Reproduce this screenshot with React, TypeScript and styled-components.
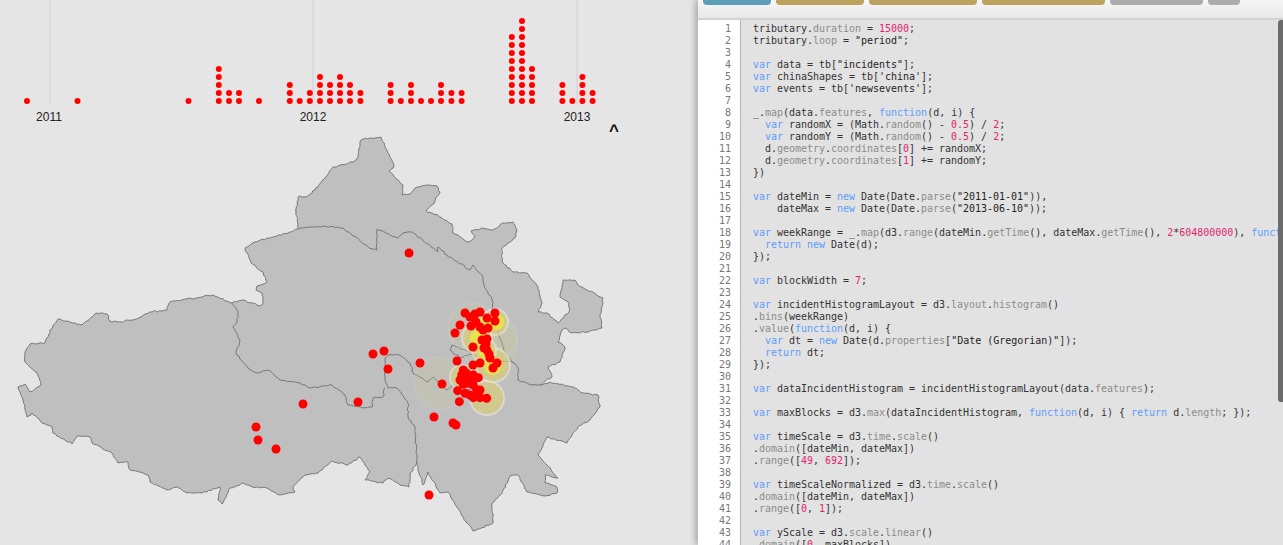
import React from "react";
import styled, { createGlobalStyle } from "styled-components";

const Global = createGlobalStyle`
  html, body { margin: 0; padding: 0; background: #e5e5e5; overflow: hidden; }
  #root { width: 1283px; height: 545px; }
`;

const Page = styled.div`
  display: grid;
  grid-template-columns: 698px 585px;
  width: 1283px;
  height: 545px;
  overflow: hidden;
  background: #e5e5e5;
`;
const VizPane = styled.div`
  position: relative;
  display: flex;
  flex-direction: column;
`;
const Chart = styled.svg`
  display: block;
  flex: none;
`;
const YearLabel = styled.text`
  font: 12px "Liberation Sans", Arial, sans-serif;
  fill: #222;
  text-anchor: middle;
`;
const Caret = styled.div`
  position: absolute;
  left: 604px;
  top: 121px;
  width: 20px;
  text-align: center;
  font: bold 17px/20px "Liberation Sans", Arial, sans-serif;
  color: #111;
`;
const EditorPane = styled.div`
  position: relative;
  display: flex;
  flex-direction: column;
  min-width: 0;
  overflow: hidden;
  box-shadow: -3px 0 6px rgba(0, 0, 0, 0.25);
  z-index: 1;
  clip-path: inset(0 0 0 -8px);
`;
const TopBar = styled.div`
  flex: none;
  box-sizing: border-box;
  height: 20px;
  display: flex;
  gap: 5px;
  padding-left: 5px;
  align-items: flex-start;
  background: linear-gradient(#f6f6f6, #e8e8e8);
  border-bottom: 2px solid #d2d2d2;
`;
const TabButton = styled.div<{ $w: number; $c: string }>`
  width: ${(p) => p.$w}px;
  height: 5px;
  background: ${(p) => p.$c};
  border-radius: 0 0 4px 4px;
`;
const Editor = styled.div`
  flex: 1;
  display: flex;
  min-height: 0;
  overflow: hidden;
  background: #e2e2e2;
  font: 10px/12px "DejaVu Sans Mono", "Liberation Mono", monospace;
`;
const Gutter = styled.div`
  flex: none;
  box-sizing: border-box;
  width: 43px;
  padding: 3px 9px 0 0;
  background: #fff;
  border-right: 1px solid #b5b5b5;
  color: #777;
  text-align: right;
`;
const Code = styled.div`
  flex: 1;
  padding: 3px 0 0 12px;
  color: #333;
  white-space: pre;
  overflow: hidden;
  letter-spacing: -0.02px;
`;
const Line = styled.div`
  height: 12px;
`;
const Kw = styled.span`color: #5c9dff;`;
const Prop = styled.span`color: #8c8c8c;`;
const Num = styled.span`color: #e6246e;`;
const Str = styled.span`color: #222;`;
const Scrollbar = styled.div`
  position: absolute;
  right: 0;
  top: 20px;
  width: 5px;
  height: 382px;
  background: #6b6b6b;
  border-radius: 3px 0 0 3px;
`;

const dotColumns: [number, number][] = [
  [27, 1], [77.5, 1], [188.5, 1], [218.8, 5], [229, 2], [239, 2], [259, 1], [289.8, 3], [299.7, 1],
  [309.8, 2], [320, 4], [330, 3], [340, 4], [350, 3], [360.4, 2], [390.6, 3], [400.8, 1], [411, 3],
  [421, 1], [431, 1], [441, 3], [451.4, 2], [461.6, 2], [511.8, 9], [522, 11], [532, 5], [562.4, 3],
  [572.4, 1], [582.4, 4], [592.6, 2],
];

const outline: [number, number][] = [
  [360,142],[363,139],[381,137],[394,166],[389,171],[403,185],[402,195],[410,194],[415,188],[428,185],[437,186],[440,192],[435,201],[426,211],[432,213],[442,218],[452,224],[453,233],[458,235],[467,242],[472,240],[475,236],[471,231],[483,228],[493,230],[503,223],[513,222],[517,230],[515,238],[502,248],[502,262],[513,272],[527,273],[538,287],[542,303],[538,312],[547,313],[558,323],[569,312],[569,303],[560,297],[563,280],[575,280],[578,285],[603,298],[600,317],[602,328],[588,332],[572,333],[565,328],[562,330],[558,342],[565,347],[560,362],[548,367],[552,377],[540,385],[550,382],[573,387],[583,393],[598,395],[600,407],[590,420],[578,427],[567,443],[547,437],[538,455],[558,478],[545,475],[545,483],[557,487],[557,493],[545,496],[527,492],[518,475],[510,476],[502,493],[492,503],[493,523],[473,531],[463,517],[448,492],[440,493],[428,472],[423,485],[419,473],[417,462],[410,475],[409,487],[400,485],[388,478],[383,483],[365,480],[370,472],[360,457],[348,465],[332,461],[318,473],[305,475],[293,487],[295,492],[280,495],[267,488],[252,487],[243,483],[230,488],[222,504],[218,500],[220,487],[202,493],[187,493],[177,487],[167,490],[150,482],[148,475],[130,470],[128,462],[118,463],[112,453],[92,443],[90,437],[77,436],[72,444],[53,433],[52,427],[42,423],[32,413],[27,417],[23,400],[18,387],[25,384],[30,392],[41,385],[37,373],[25,362],[25,352],[30,344],[45,343],[50,330],[58,319],[70,322],[82,325],[97,313],[107,314],[110,321],[118,322],[133,320],[150,312],[167,310],[170,302],[213,295],[232,303],[243,300],[260,306],[263,304],[262,293],[256,290],[257,286],[267,282],[263,272],[251,263],[245,248],[255,242],[290,232],[298,229],[296,212],[298,197],[308,196],[315,190],[333,167],[353,162],[358,157],
];

const borders: [number, number][][] = [
  [[298,229],[310,227],[323,226],[343,228],[368,247],[377,250],[377,229],[398,238],[403,233],[412,232],[438,252],[438,247],[447,255],[470,270],[473,265],[483,277],[484,285],[493,302],[492,312],[497,330],[505,352],[512,362],[518,368],[518,380],[532,385],[540,385]],
  [[232,303],[238,312],[237,322],[233,327],[235,330],[240,340],[236,353],[248,368],[258,373],[268,370],[280,380],[300,383],[310,388],[332,385],[345,395],[348,405],[363,408],[372,407],[373,398],[383,397],[385,388]],
  [[470,390],[453,385],[447,390],[438,382],[433,377],[428,382],[413,373],[410,363],[400,355],[388,355],[385,358],[385,380],[388,388],[397,388],[408,403],[408,417],[415,427],[417,458],[417,462]],
  [[512,362],[480,358],[470,354],[460,358],[450,350],[452,345],[470,352],[485,350]],
];

function rugged(points: [number, number][], seed: number, closed: boolean): string {
  let s = seed;
  const rnd = () => {
    s = (s * 16807) % 2147483647;
    return s / 2147483647 - 0.5;
  };
  const pts = closed ? [...points, points[0]] : points;
  let d = `M${pts[0][0]} ${pts[0][1]}`;
  for (let i = 1; i < pts.length; i++) {
    const [x0, y0] = pts[i - 1];
    const [x1, y1] = pts[i];
    const n = Math.max(1, Math.round(Math.hypot(x1 - x0, y1 - y0) / 2.5));
    for (let k = 1; k <= n; k++) {
      const t = k / n;
      const j = k === n ? 0 : 1.5;
      d += `L${(x0 + (x1 - x0) * t + rnd() * j).toFixed(1)} ${(y0 + (y1 - y0) * t + rnd() * j).toFixed(1)}`;
    }
  }
  return d + (closed ? "Z" : "");
}

const faintHalos: [number, number, number][] = [
  [440, 383, 26], [490, 345, 27], [473, 328, 25], [495, 338, 22],
];
const goldHalos: [number, number, number][] = [
  [487, 398, 17], [495, 322, 13], [477, 338, 15], [493, 365, 17], [462, 377, 12], [484, 350, 12],
];
const yellowSpots: [number, number, number][] = [
  [493, 366, 9], [478, 338, 8], [486, 352, 7], [496, 322, 8], [462, 377, 6], [483, 322, 5],
];

const clusterZ: [number, number][] = [
  [160,225],[155,240],[165,250],[150,255],[180,245],[190,240],[205,248],[175,265],[160,268],[190,270],
  [200,285],[143,287],[165,295],[180,300],[190,308],[210,285],[210,308],[230,310],[148,320],[170,235],[185,255],
];
const incidents: [number, number][] = [
  [409,253],[303,404],[256,427],[258,440],[276,449],[373,354],[384,351],[388,369],[420,363],[358,402],
  [434,417],[453,423],[456,425],[429,495],[442,384],[455,333],
  [465,313],[470,317],[480,312],[475,314],[487,318],[495,313],[495,321],[460,325],[471,326],[480,327],
  [488,328],[483,330],[487,339],[473,347],[484,348],[487,350],[490,358],[497,363],[493,368],[480,363],
  [473,365],[457,361],[476,322],[482,340],[486,344],[489,354],
  ...clusterZ.map(([x, y]): [number, number] => [410 + x / 3, 295 + y / 3]),
];

const codeText = `tributary.duration = 15000;
tributary.loop = "period";

var data = tb["incidents"];
var chinaShapes = tb['china'];
var events = tb['newsevents'];

_.map(data.features, function(d, i) {
  var randomX = (Math.random() - 0.5) / 2;
  var randomY = (Math.random() - 0.5) / 2;
  d.geometry.coordinates[0] += randomX;
  d.geometry.coordinates[1] += randomY;
})

var dateMin = new Date(Date.parse("2011-01-01")),
    dateMax = new Date(Date.parse("2013-06-10"));

var weekRange = _.map(d3.range(dateMin.getTime(), dateMax.getTime(), 2*604800000), function(d, i) {
  return new Date(d);
});

var blockWidth = 7;

var incidentHistogramLayout = d3.layout.histogram()
.bins(weekRange)
.value(function(d, i) {
  var dt = new Date(d.properties["Date (Gregorian)"]);
  return dt;
});

var dataIncidentHistogram = incidentHistogramLayout(data.features);

var maxBlocks = d3.max(dataIncidentHistogram, function(d, i) { return d.length; });

var timeScale = d3.time.scale()
.domain([dateMin, dateMax])
.range([49, 692]);

var timeScaleNormalized = d3.time.scale()
.domain([dateMin, dateMax])
.range([0, 1]);

var yScale = d3.scale.linear()
.domain([0, maxBlocks])`.split("\n");

function highlight(line: string): React.ReactNode[] {
  const re = /("[^"]*"|'[^']*')|\b(var|function|new|return)\b|(\.[A-Za-z_]\w*)|\b(\d+(?:\.\d+)?)\b/g;
  const out: React.ReactNode[] = [];
  let last = 0;
  let m: RegExpExecArray | null;
  while ((m = re.exec(line))) {
    if (m.index > last) out.push(line.slice(last, m.index));
    if (m[1]) out.push(<Str key={m.index}>{m[1]}</Str>);
    else if (m[2]) out.push(<Kw key={m.index}>{m[2]}</Kw>);
    else if (m[3]) out.push(<React.Fragment key={m.index}>.<Prop>{m[3].slice(1)}</Prop></React.Fragment>);
    else out.push(<Num key={m.index}>{m[4]}</Num>);
    last = m.index + m[0].length;
  }
  if (last < line.length) out.push(line.slice(last));
  return out;
}

const tabs: [number, string][] = [
  [68, "#5a9eb8"], [88, "#bda25f"], [108, "#bda25f"], [123, "#bda25f"], [93, "#ababab"], [32, "#ababab"],
];

export default function App() {
  return (
    <Page>
      <Global />
      <VizPane>
        <Chart width={698} height={135} viewBox="0 0 698 135">
          {[50, 313, 577].map((x) => (
            <line key={x} x1={x} x2={x} y1={0} y2={105} stroke="#d0d0d0" strokeWidth={1} />
          ))}
          {dotColumns.map(([x, n]) =>
            Array.from({ length: n }, (_, i) => (
              <circle key={`${x}-${i}`} cx={x} cy={101 - i * 8} r={3} fill="#ff0000" />
            ))
          )}
          <YearLabel x={49} y={121}>2011</YearLabel>
          <YearLabel x={313} y={121}>2012</YearLabel>
          <YearLabel x={577} y={121}>2013</YearLabel>
        </Chart>
        <Chart width={698} height={410} viewBox="0 135 698 410">
          <path d={rugged(outline, 1234, true)} fill="#bfbfbf" stroke="#787878" strokeWidth={1} strokeLinejoin="round" />
          {borders.map((b, i) => (
            <path key={i} d={rugged(b, 777 + i * 91, false)} fill="none" stroke="#787878" strokeWidth={1} strokeLinejoin="round" />
          ))}
          {faintHalos.map(([x, y, r]) => (
            <circle key={`f${x}${y}`} cx={x} cy={y} r={r} fill="#d4cc8a" fillOpacity={0.16} stroke="#e5e5e5" strokeOpacity={0.12} strokeWidth={2} />
          ))}
          {goldHalos.map(([x, y, r]) => (
            <circle key={`g${x}${y}`} cx={x} cy={y} r={r} fill="#dccf6e" fillOpacity={0.6} stroke="#e6e6e6" strokeOpacity={0.6} strokeWidth={2} />
          ))}
          {yellowSpots.map(([x, y, r]) => (
            <circle key={`y${x}${y}`} cx={x} cy={y} r={r} fill="#f0e63c" fillOpacity={0.8} />
          ))}
          {incidents.map(([x, y], i) => (
            <circle key={i} cx={x} cy={y} r={4.5} fill="#ff0000" />
          ))}
        </Chart>
        <Caret>^</Caret>
      </VizPane>
      <EditorPane>
        <TopBar>
          {tabs.map(([w, c], i) => (
            <TabButton key={i} $w={w} $c={c} />
          ))}
        </TopBar>
        <Editor>
          <Gutter>
            {codeText.map((_, i) => (
              <Line key={i}>{i + 1}</Line>
            ))}
          </Gutter>
          <Code>
            {codeText.map((l, i) => (
              <Line key={i}>{highlight(l)}</Line>
            ))}
          </Code>
        </Editor>
        <Scrollbar />
      </EditorPane>
    </Page>
  );
}
